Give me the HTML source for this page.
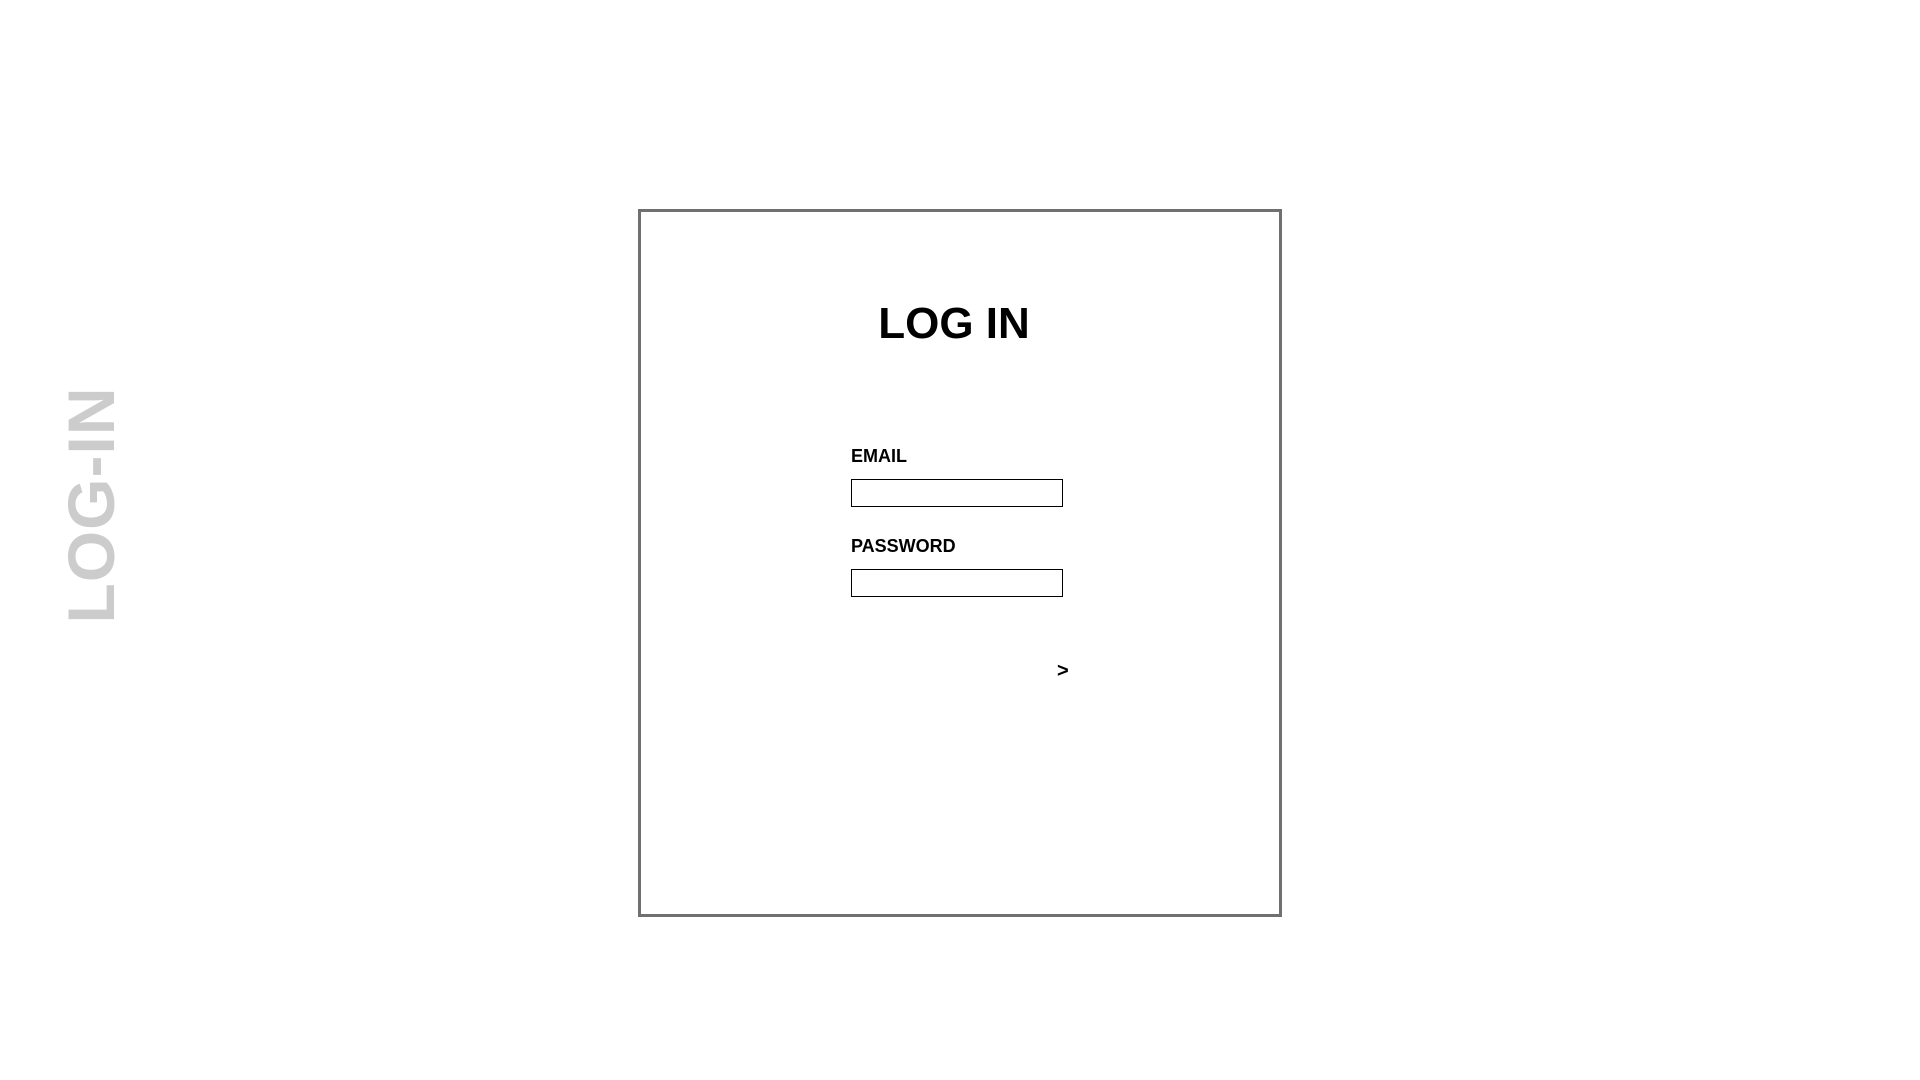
<!DOCTYPE html>
<html><head><style>
body{margin:0;width:1920px;height:1080px;background:#fff;position:relative;overflow:hidden;font-family:"Liberation Sans",Arial,sans-serif;font-weight:bold;}
.box{position:absolute;left:638px;top:209px;width:638px;height:702px;border:3px solid #707070;}
.side{position:absolute;left:91px;top:505px;transform:translate(-50%,-50%) rotate(-90deg);font-size:66px;color:#cccccc;white-space:nowrap;letter-spacing:1px;line-height:1;}
.lbl{position:absolute;left:851px;font-size:18px;line-height:1;}
.inp{position:absolute;left:851px;width:210px;height:26px;border:1.5px solid #000;}
</style></head><body>
<div class="side">LOG-IN</div>
<div class="box"></div>
<div style="position:absolute;left:0;width:1908px;text-align:center;top:302px;font-size:44px;line-height:1;letter-spacing:0px;">LOG IN</div>
<div class="lbl" style="top:447px">EMAIL</div>
<div class="inp" style="top:479px"></div>
<div class="lbl" style="top:537px">PASSWORD</div>
<div class="inp" style="top:569px"></div>
<div style="position:absolute;left:1057px;top:661px;font-size:20px;line-height:1;">&gt;</div>
</body></html>
